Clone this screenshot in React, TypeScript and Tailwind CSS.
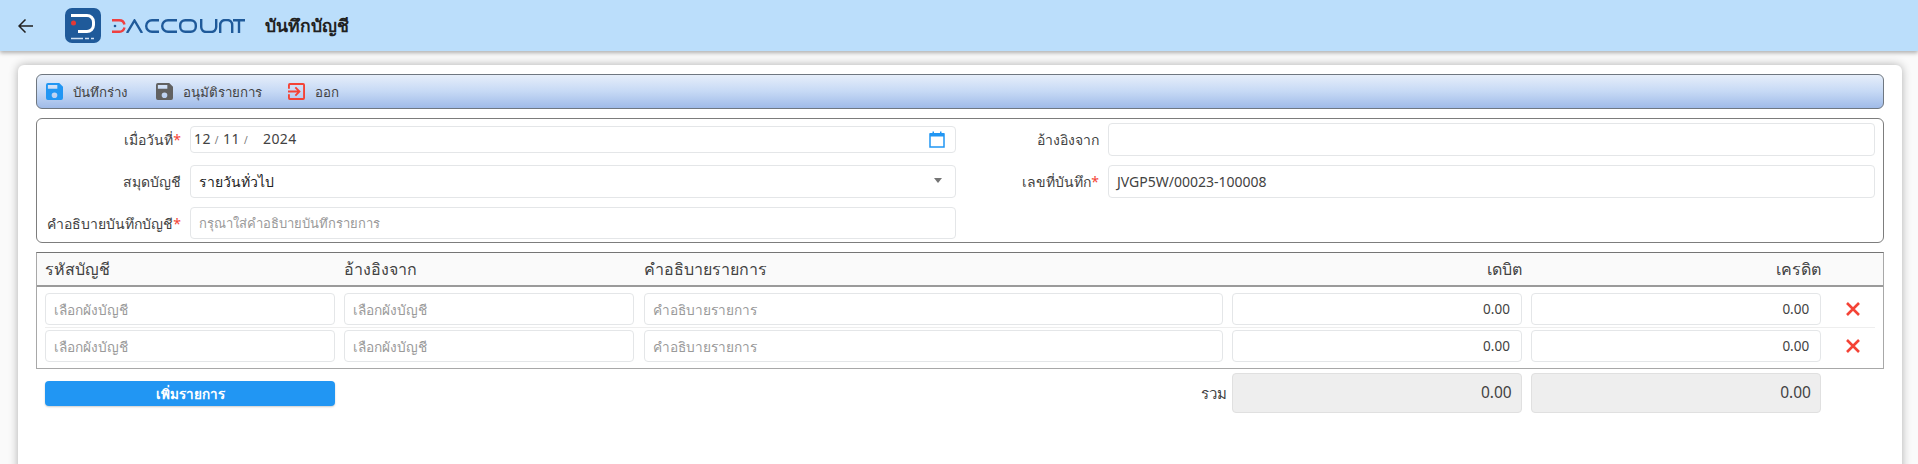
import React from "react";

function Logo() {
  return (
    <div className="flex items-center">
      <svg width="36" height="35" viewBox="0 0 36 35">
        <rect width="36" height="35" rx="7" fill="#1f5a9a" />
        <path d="M6 6h16a8 8 0 0 1 8 8v3a8 8 0 0 1-8 8H13v-3h9a5 5 0 0 0 5-5v-3a5 5 0 0 0-5-5H6z" fill="#fff" />
        <circle cx="8.500" cy="15" r="2.500" fill="#e53935" />
        <path d="M6 30.500h12M20 30.500h4M26 30.500h3" stroke="#cfe0f2" strokeWidth="1.500" />
      </svg>
      <svg width="133" height="14" viewBox="0 0 133 14" className="ml-[11px]" fill="none" strokeWidth="2.400" stroke="#1f5a9a">
        <path d="M0 1.200H7a5.500 5.500 0 0 1 5.500 4.300M12.500 8.500A5.500 5.500 0 0 1 7 12.800H0" stroke="#ef4040" />
        <circle cx="3" cy="7" r="1.300" fill="#1f5a9a" stroke="none" />
        <path d="M15 14 22.500 1.500 30 14" />
        <path d="M47 1.200H40a5.800 5.800 0 0 0 0 11.600H47" />
        <path d="M65 1.200H56a5.800 5.800 0 0 0 0 11.600H65" />
        <rect x="68.200" y="1.200" width="15.600" height="11.600" rx="5" />
        <path d="M89.200 0V8a5 5 0 0 0 5 5h5a5 5 0 0 0 5-5V0" />
        <path d="M108.200 14V6a5 5 0 0 1 5-5h2a5 5 0 0 1 5 5v8" />
        <path d="M121 1.200h12M127 1v13" />
      </svg>
    </div>
  );
}

function Floppy({ color }: { color: string }) {
  return (
    <svg width="17" height="17" viewBox="3 3 18 18" fill={color}>
      <path d="M17 3H5a2 2 0 0 0-2 2v14a2 2 0 0 0 2 2h14a2 2 0 0 0 2-2V7l-4-4zm-5 16a3 3 0 1 1 0-6 3 3 0 0 1 0 6zm3-10H5V5h10v4z" />
    </svg>
  );
}

function ExitIcon() {
  return (
    <svg width="17" height="17" viewBox="3 3 18 18" fill="#f44336">
      <path d="M10.090 15.590 11.500 17l5-5-5-5-1.410 1.410L12.670 11H3v2h9.670l-2.580 2.590zM19 3H5a2 2 0 0 0-2 2v4h2V5h14v14H5v-4H3v4a2 2 0 0 0 2 2h14a2 2 0 0 0 2-2V5a2 2 0 0 0-2-2z" />
    </svg>
  );
}

function Label({ text, req, width }: { text: string; req?: boolean; width: string }) {
  return (
    <div className={`${width} shrink-0 pr-[9px] text-right text-[14px] whitespace-nowrap text-[#424242]`}>
      {text}
      {req && <span className="text-[#f44336]">*</span>}
    </div>
  );
}

const box = "flex items-center rounded-[4px] border border-[#e4e6e8] bg-white";

function Row() {
  return (
    <div className="grid h-[32px] grid-cols-[290px_290px_579px_290px_290px_1fr] gap-x-[9.300px]">
      <div className={`${box} px-[8px] pt-[2px] text-[13.700px] text-[#9a9a9a]`}>เลือกผังบัญชี</div>
      <div className={`${box} px-[8px] pt-[2px] text-[13.700px] text-[#9a9a9a]`}>เลือกผังบัญชี</div>
      <div className={`${box} px-[8px] pt-[2px] text-[13.700px] text-[#9a9a9a]`}>คำอธิบายรายการ</div>
      <div className={`${box} justify-end pr-[11px] pt-[1px] text-[13.500px] text-[#424242]`}>0.00</div>
      <div className={`${box} justify-end pr-[11px] pt-[1px] text-[13.500px] text-[#424242]`}>0.00</div>
      <div className="flex items-center justify-center">
        <svg width="14" height="14" viewBox="0 0 14 14" stroke="#f44336" strokeWidth="2.600">
          <path d="M1 1l12 12M13 1L1 13" />
        </svg>
      </div>
    </div>
  );
}

export default function App() {
  return (
    <div
      className="h-[464px] w-[1918px] overflow-hidden bg-[#fafafa]"
      style={{ fontFamily: '"Noto Sans", "Open Sans", sans-serif' }}
    >
      <header className="flex h-[51px] items-center bg-[#bbdefb] pl-[18px] shadow-[0_2px_4px_rgba(0,0,0,0.3)]">
        <svg width="15" height="14" viewBox="0 0 15 14" fill="none" stroke="#212121" strokeWidth="1.500">
          <path d="M15 7H1.500M7.500 .5 1 7l6.500 6.500" />
        </svg>
        <div className="ml-[32px]">
          <Logo />
        </div>
        <h1 className="ml-[20px] text-[17.500px] font-bold text-[#212121]">บันทึกบัญชี</h1>
      </header>

      <main className="ml-[18px] mt-[14px] h-[420px] w-[1884px] rounded-[6px] bg-white px-[18px] pt-[9px] shadow-[0_0_10px_rgba(0,0,0,0.3)]">
        <div className="flex h-[35px] items-center rounded-[6px] border border-[#6f7780] bg-gradient-to-b from-[#e6eefa] via-[#c6d9f5] to-[#a0bbe8] pl-[9px] text-[13.300px] text-[#424242]">
          <Floppy color="#2196f3" />
          <span className="ml-[10px] w-[55px] whitespace-nowrap pt-[3px]">บันทึกร่าง</span>
          <span className="ml-[28px]"><Floppy color="#616161" /></span>
          <span className="ml-[10px] w-[78px] whitespace-nowrap pt-[3px]">อนุมัติรายการ</span>
          <span className="ml-[27px]"><ExitIcon /></span>
          <span className="ml-[10px] whitespace-nowrap pt-[3px]">ออก</span>
        </div>

        <section className="mt-[9px] grid h-[125px] grid-cols-[919px_1fr] rounded-[6px] border border-[#7d7d7d] pr-[8px]">
          <div className="flex flex-col pt-[7px]">
            <div className="flex h-[27px] items-center">
              <Label text="เมื่อวันที่" req width="w-[153px]" />
              <div className={`${box} h-[27px] w-[766px] justify-between pl-[3px] pr-[10px] text-[14px] text-[#424242]`}>
                <span className="whitespace-pre pb-[2px] tracking-[0.4px]">
                  12 <span className="text-[10px] text-[#757575]">/</span> 11 <span className="text-[10px] text-[#757575]">/</span>
                  <span className="ml-[15px]">2024</span>
                </span>
                <svg width="16" height="17" viewBox="0 0 16 17" fill="none">
                  <rect x="1" y="3" width="14" height="13" stroke="#2196f3" strokeWidth="1.500" />
                  <rect x="1" y="2" width="14" height="3.500" fill="#2196f3" />
                  <rect x="3.500" y="0.500" width="1.500" height="2" fill="#2196f3" />
                  <rect x="11" y="0.500" width="1.500" height="2" fill="#2196f3" />
                </svg>
              </div>
            </div>
            <div className="mt-[12px] flex h-[33px] items-center">
              <Label text="สมุดบัญชี" width="w-[153px]" />
              <div className={`${box} h-[33px] w-[766px] justify-between pl-[8px] pr-[13px] text-[14px] text-[#212121]`}>
                <span>รายวันทั่วไป</span>
                <span className="mb-[2px] h-0 w-0 border-x-[4.500px] border-t-[5px] border-x-transparent border-t-[#757575]" />
              </div>
            </div>
            <div className="mt-[9px] flex h-[32px] items-center">
              <Label text="คำอธิบายบันทึกบัญชี" req width="w-[153px]" />
              <div className={`${box} h-[32px] w-[766px] px-[8px] pt-[1px] text-[13px] text-[#9a9a9a]`}>กรุณาใส่คำอธิบายบันทึกรายการ</div>
            </div>
          </div>
          <div className="flex flex-col pt-[4px]">
            <div className="flex h-[33px] items-center">
              <Label text="อ้างอิงจาก" width="w-[152px]" />
              <div className={`${box} h-[33px] flex-1`} />
            </div>
            <div className="mt-[9px] flex h-[33px] items-center">
              <Label text="เลขที่บันทึก" req width="w-[152px]" />
              <div className={`${box} h-[33px] flex-1 px-[8px] text-[14px] text-[#424242]`}>JVGP5W/00023-100008</div>
            </div>
          </div>
        </section>

        <section className="mt-[9px] h-[117px] border border-[#a8a8a8] border-t-[#757575]">
          <div className="grid h-[34px] grid-cols-[290px_290px_579px_290px_290px_1fr] items-center gap-x-[9.300px] border-b-2 border-[#9a9a9a] bg-[#fafafa] pl-[8px] text-[16px] text-[#424242]">
            <div>รหัสบัญชี</div>
            <div>อ้างอิงจาก</div>
            <div>คำอธิบายรายการ</div>
            <div className="text-right">เดบิต</div>
            <div className="text-right">เครดิต</div>
            <div />
          </div>
          <div className="pl-[8px] pr-[8px] pt-[6px]">
            <Row />
            <div className="my-[2px] h-px bg-[#eeeeee]" />
            <Row />
          </div>
        </section>

        <div className="mt-[4px] grid grid-cols-[290px_1fr_290px_290px] items-start gap-x-[9.300px] pl-[9px] pr-[63px]">
          <button className="mt-[8px] h-[25px] rounded-[4px] bg-[#2196f3] pt-[1px] text-[13.500px] font-bold text-white shadow-[0_1px_2px_rgba(0,0,0,0.2)]">เพิ่มรายการ</button>
          <div className="-mr-[5px] flex h-[40px] items-center justify-end text-[15px] text-[#424242]">รวม</div>
          <div className="flex h-[40px] items-center justify-end rounded-[4px] border border-[#e0e0e0] bg-[#eeeeee] pr-[9px] text-[15.500px] text-[#424242]">0.00</div>
          <div className="flex h-[40px] items-center justify-end rounded-[4px] border border-[#e0e0e0] bg-[#eeeeee] pr-[9px] text-[15.500px] text-[#424242]">0.00</div>
        </div>
      </main>
    </div>
  );
}
